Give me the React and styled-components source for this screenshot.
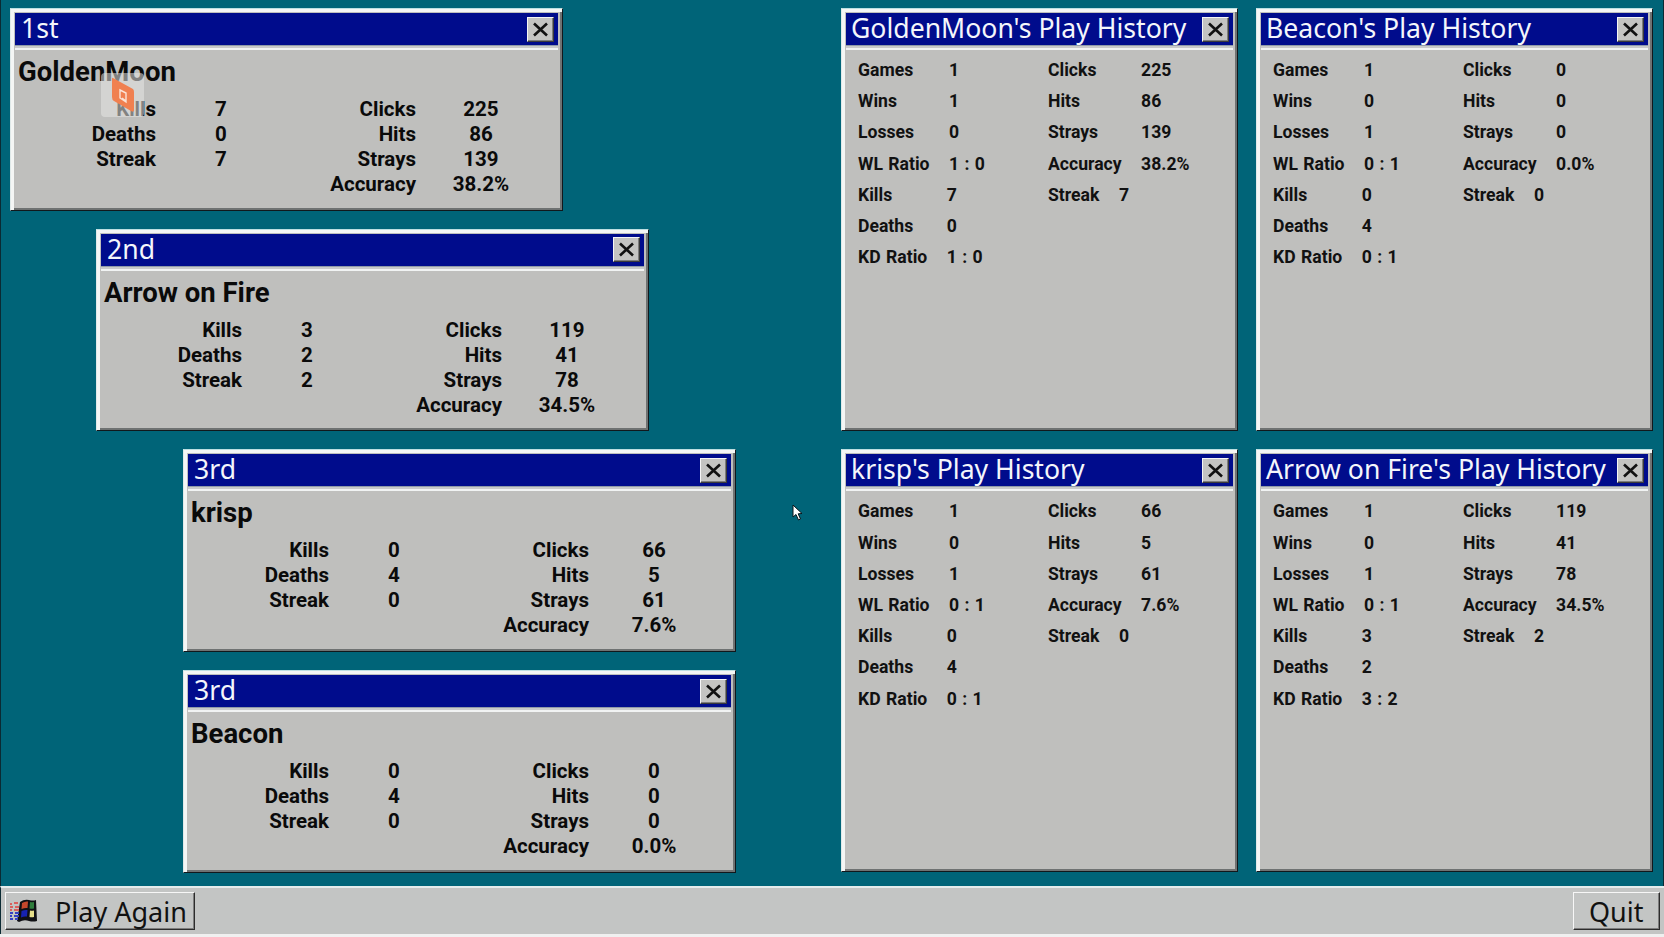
import React from "react";
import styled, { createGlobalStyle } from "styled-components";

const Global = createGlobalStyle`
  html, body { margin: 0; padding: 0; background: #f0f0f0; }
  * { box-sizing: border-box; }
`;

const Screen = styled.div`
  position: relative;
  width: 1664px;
  height: 937px;
  overflow: hidden;
  display: flex;
  flex-direction: column;
  font-family: Roboto, "Liberation Sans", sans-serif;
  color: #0a0a0a;
`;
const Desktop = styled.main`
  height: 886px;
  flex: none;
  background: #006478;
  border-left: 1px solid #0b2a33;
  border-right: 1px solid #0b2a33;
  padding: 8px 10px 0 8px;
  display: flex;
  justify-content: space-between;
  align-items: flex-start;
`;
const Ranking = styled.section`
  display: flex;
  flex-direction: column;
  gap: 18px;
`;
const HistoryGrid = styled.section`
  display: grid;
  grid-template-columns: 397px 397px;
  grid-auto-rows: 422.7px;
  gap: 18.8px 18px;
`;
const Window = styled.article`
  display: flex;
  flex-direction: column;
  background: #bfbfbd;
  border: 1px solid;
  border-color: #bcdfe2 #11181c #11181c #dfe9e9;
  box-shadow: inset 3px 3px 0 #f4f6f5, inset -2px -2px 0 #6f7272;
  padding: 4px 4px 4px 4px;
`;
const RankWindow = styled(Window)`
  width: 553px;
  height: 202.7px;
  margin-left: ${(p) => p.$indent}px;
`;
const TitleBar = styled.header`
  flex: none;
  height: 32px;
  background: #000c8c;
  color: #f4f6fb;
  font-family: "Noto Sans", sans-serif;
  font-size: 26.6px;
  line-height: 30px;
  padding: 0 6px 0 ${(p) => p.$inset}px;
  display: flex;
  align-items: center;
  justify-content: space-between;
  white-space: nowrap;
`;
const TitleText = styled.span`
  position: relative;
  top: -1px;
`;
const TitleRule = styled.div`
  flex: none;
  height: 5px;
  border-top: 1px solid #8f9aa8;
  border-bottom: 2px solid #f1f3f3;
  background: #c8cacb;
`;
const CloseButton = styled.button`
  flex: none;
  width: 27px;
  height: 25px;
  padding: 0;
  display: flex;
  align-items: center;
  justify-content: center;
  background: #c4c4c2;
  border: 1px solid;
  border-color: #f5f5f5 #3a3a3a #3a3a3a #f5f5f5;
  box-shadow: inset -1px -1px 0 #7d7d7d;
  margin-right: -2px;
`;
const PlayerName = styled.h2`
  margin: 0;
  padding: 4px 0 0 3px;
  font-size: 27.5px;
  line-height: 36px;
  font-weight: 700;
  font-family: Roboto, sans-serif;
`;
const ScoreGrid = styled.div`
  margin: 7px 0 0 11px;
  display: grid;
  grid-template-columns: repeat(4, 130px);
  grid-auto-rows: 25px;
  font-size: 20.5px;
  line-height: 25px;
  font-weight: 700;
`;
const ScoreLabel = styled.span`
  text-align: right;
  grid-column: ${(p) => p.$col};
`;
const ScoreValue = styled.span`
  text-align: center;
  grid-column: ${(p) => p.$col};
`;
const HistoryBody = styled.div`
  display: grid;
  grid-template-columns: 190px 1fr;
  padding: 5px 0 0 12px;
`;
const HistoryColumn = styled.div`
  display: flex;
  flex-direction: column;
`;
const StatTable = styled.div`
  display: grid;
  grid-template-columns: max-content max-content;
  column-gap: 19.5px;
  grid-auto-rows: 31.2px;
  font-size: 17.6px;
  line-height: 31.2px;
  font-weight: 700;
  word-spacing: 1px;
  color: #111;
`;
const Taskbar = styled.footer`
  flex: none;
  height: 48px;
  background: #c3c5c4;
  border-top: 2px solid #e4ecec;
  padding: 4px 4px 4px 4px;
  display: flex;
  justify-content: space-between;
  border-left: 1px solid #0b2a33;
`;
const TaskButton = styled.button`
  height: 38px;
  width: ${(p) => p.$width}px;
  padding: 0 0 0 ${(p) => p.$pad}px;
  display: flex;
  align-items: center;
  gap: 18px;
  background: #c3c5c4;
  border: 1px solid;
  border-color: #f7f7f7 #2c2c2c #2c2c2c #f7f7f7;
  box-shadow: inset -1px -1px 0 #7d7d7d;
  font-family: "Noto Sans", sans-serif;
  font-size: 27px;
  color: #111;
`;
const Strip = styled.div`
  flex: 1;
  background: #f0f0f0;
`;
const Watermark = styled.div`
  position: absolute;
  left: 101px;
  top: 73px;
  width: 43px;
  height: 44px;
  border-radius: 4px;
  background: rgba(230, 230, 228, 0.55);
  display: flex;
  align-items: center;
  justify-content: center;
`;
const Pointer = styled.svg`
  position: absolute;
  left: 792px;
  top: 504px;
`;

const CloseIcon = () => (
  <svg width="17" height="15" viewBox="0 0 17 15">
    <path d="M2 1.5 L15 13.5 M15 1.5 L2 13.5" stroke="#111" strokeWidth="2.6" fill="none" />
  </svg>
);

const Flag = () => (
  <svg width="28" height="24" viewBox="0 0 28 24">
    <path d="M11 3 Q15 0 20 1 Q24 2 27 1 L28 22 Q24 23 20 22 Q15 20 10 23 L8 22 Z" fill="#101014" />
    <path d="M13 4 Q16 2 19 2.5 L18.5 9 Q16 8.5 12.5 10 Z" fill="#c4472c" />
    <path d="M21 3 Q23 3.5 25 3 L25 9.5 Q23 10 20.5 9.5 Z" fill="#2f7d3c" />
    <path d="M12.5 12 Q16 10.5 18.5 11 L18 17.5 Q15 17 12 18.5 Z" fill="#1622b0" />
    <path d="M21 11.5 Q23 12 25 11.5 L25 18 Q23 18.5 20.5 18 Z" fill="#e6df8a" />
    <path d="M1 5h2M5 4h4M1 8h3M6 8h4M1 11h2M5 11h5" stroke="#d8615e" strokeWidth="2" />
    <path d="M1 14h3M6 14h4M1 17h2M5 17h5M1 20h3M6 20h3" stroke="#3540c4" strokeWidth="2" />
  </svg>
);

const OrangeMark = () => (
  <svg width="24" height="36" viewBox="0 0 24 36">
    <path d="M2 1 L22 12 Q23 13 23 15 L23 33 Q23 36 20 34 L3 24 Q1 23 1 20 L1 2 Q1 0 2 1 Z" fill="#f08050" />
    <path d="M9 13 L15 16 L15 25 L9 21 Z M11 21 L15 24" fill="none" stroke="#fbe3d6" strokeWidth="1.4" />
  </svg>
);

const ranks = [
  { place: "1st", name: "GoldenMoon", indent: 1, kills: 7, deaths: 0, streak: 7, clicks: 225, hits: 86, strays: 139, acc: "38.2%" },
  { place: "2nd", name: "Arrow on Fire", indent: 87, kills: 3, deaths: 2, streak: 2, clicks: 119, hits: 41, strays: 78, acc: "34.5%" },
  { place: "3rd", name: "krisp", indent: 174, kills: 0, deaths: 4, streak: 0, clicks: 66, hits: 5, strays: 61, acc: "7.6%" },
  { place: "3rd", name: "Beacon", indent: 174, kills: 0, deaths: 4, streak: 0, clicks: 0, hits: 0, strays: 0, acc: "0.0%" },
];

const histories = [
  { name: "GoldenMoon", games: 1, wins: 1, losses: 0, wl: "1 : 0", kills: 7, deaths: 0, kd: "1 : 0", clicks: 225, hits: 86, strays: 139, acc: "38.2%", streak: 7 },
  { name: "Beacon", games: 1, wins: 0, losses: 1, wl: "0 : 1", kills: 0, deaths: 4, kd: "0 : 1", clicks: 0, hits: 0, strays: 0, acc: "0.0%", streak: 0 },
  { name: "krisp", games: 1, wins: 0, losses: 1, wl: "0 : 1", kills: 0, deaths: 4, kd: "0 : 1", clicks: 66, hits: 5, strays: 61, acc: "7.6%", streak: 0 },
  { name: "Arrow on Fire", games: 1, wins: 0, losses: 1, wl: "0 : 1", kills: 3, deaths: 2, kd: "3 : 2", clicks: 119, hits: 41, strays: 78, acc: "34.5%", streak: 2 },
];

const Title = ({ inset, children }) => (
  <>
    <TitleBar $inset={inset}>
      <TitleText>{children}</TitleText>
      <CloseButton aria-label="Close"><CloseIcon /></CloseButton>
    </TitleBar>
    <TitleRule />
  </>
);

const Table = ({ rows }) => (
  <StatTable>
    {rows.map(([k, v]) => (
      <React.Fragment key={k}>
        <span>{k}</span>
        <span>{v}</span>
      </React.Fragment>
    ))}
  </StatTable>
);

const ScoreRow = ({ left, right }) => (
  <>
    {left && (
      <>
        <ScoreLabel $col={1}>{left[0]}</ScoreLabel>
        <ScoreValue $col={2}>{left[1]}</ScoreValue>
      </>
    )}
    <ScoreLabel $col={3}>{right[0]}</ScoreLabel>
    <ScoreValue $col={4}>{right[1]}</ScoreValue>
  </>
);

export default function App() {
  return (
    <>
      <Global />
      <Screen>
        <Desktop>
          <Ranking>
            {ranks.map((r) => (
              <RankWindow key={r.name} $indent={r.indent}>
                <Title inset={6}>{r.place}</Title>
                <PlayerName>{r.name}</PlayerName>
                <ScoreGrid>
                  <ScoreRow left={["Kills", r.kills]} right={["Clicks", r.clicks]} />
                  <ScoreRow left={["Deaths", r.deaths]} right={["Hits", r.hits]} />
                  <ScoreRow left={["Streak", r.streak]} right={["Strays", r.strays]} />
                  <ScoreRow right={["Accuracy", r.acc]} />
                </ScoreGrid>
              </RankWindow>
            ))}
          </Ranking>
          <HistoryGrid>
            {histories.map((h) => (
              <Window key={h.name}>
                <Title inset={5}>{h.name}'s Play History</Title>
                <HistoryBody>
                  <HistoryColumn>
                    <Table rows={[["Games", h.games], ["Wins", h.wins], ["Losses", h.losses], ["WL Ratio", h.wl]]} />
                    <Table rows={[["Kills", h.kills], ["Deaths", h.deaths], ["KD Ratio", h.kd]]} />
                  </HistoryColumn>
                  <HistoryColumn>
                    <Table rows={[["Clicks", h.clicks], ["Hits", h.hits], ["Strays", h.strays], ["Accuracy", h.acc]]} />
                    <Table rows={[["Streak", h.streak]]} />
                  </HistoryColumn>
                </HistoryBody>
              </Window>
            ))}
          </HistoryGrid>
        </Desktop>
        <Taskbar>
          <TaskButton $width={190} $pad={3}><Flag />Play Again</TaskButton>
          <TaskButton $width={87} $pad={15}>Quit</TaskButton>
        </Taskbar>
        <Strip />
        <Watermark><OrangeMark /></Watermark>
        <Pointer width="12" height="18" viewBox="0 0 12 18">
          <path d="M1 1 L1 13 L4 10.5 L6.5 16 L8.5 15 L6.2 9.8 L10 9.5 Z" fill="#fff" stroke="#0b1418" strokeWidth="1" />
        </Pointer>
      </Screen>
    </>
  );
}
